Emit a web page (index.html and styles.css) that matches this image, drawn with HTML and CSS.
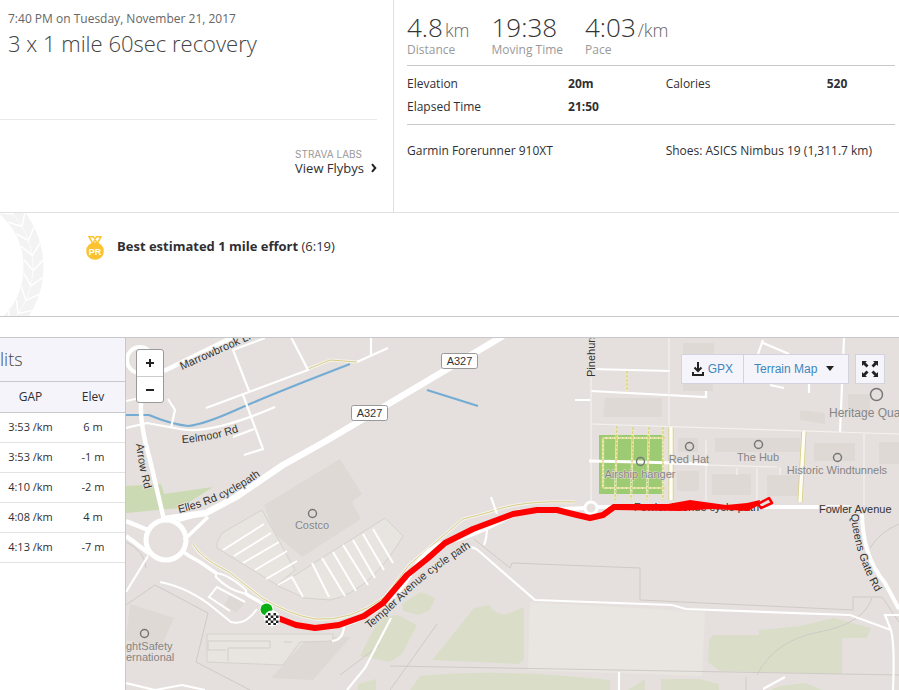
FILE: index.html
```html
<!DOCTYPE html>
<html lang="en">
<head>
<meta charset="utf-8">
<title>3 x 1 mile 60sec recovery</title>
<link rel="stylesheet" href="styles.css">
</head>
<body>
<header class="summary">
  <section class="activity">
    <div class="intro">
      <time class="date">7:40 PM on Tuesday, November 21, 2017</time>
      <h1 class="title">3 x 1 mile 60sec recovery</h1>
    </div>
    <div class="labs">
      <a class="flybys" href="#flybys">
        <span class="eyebrow">STRAVA LABS</span>
        <span class="flybys-name">View Flybys
          <svg class="chevron" viewBox="0 0 6 10" aria-hidden="true"><path d="M1 1.2 4.3 5 1 8.8"/></svg>
        </span>
      </a>
    </div>
  </section>
  <section class="numbers">
    <ul class="stats">
      <li><strong class="value">4.8<span class="unit">km</span></strong><span class="label">Distance</span></li>
      <li><strong class="value">19:38</strong><span class="label">Moving Time</span></li>
      <li><strong class="value">4:03<span class="unit">/km</span></strong><span class="label">Pace</span></li>
    </ul>
    <dl class="more">
      <dt>Elevation</dt><dd>20m</dd>
      <dt>Calories</dt><dd>520</dd>
      <dt>Elapsed Time</dt><dd>21:50</dd>
    </dl>
    <div class="gear">
      <span>Garmin Forerunner 910XT</span>
      <span>Shoes: ASICS Nimbus 19 (1,311.7 km)</span>
    </div>
  </section>
</header>

<section class="achievements">
  <svg class="laurel" viewBox="0 213 46 103" aria-hidden="true">
    <defs><path id="vein" d="M33 272 24 261M33 272 44 261"/></defs>
    <circle cx="-47" cy="267" r="80.500" fill="none" stroke="#f3f3f3" stroke-width="20"/>
    <g fill="none" stroke="#fff" stroke-width="1.500">
      <circle cx="-47" cy="267" r="80" stroke-width=".7"/>
      <use href="#vein" transform="rotate(-45 -47 267)"/>
      <use href="#vein" transform="rotate(-34 -47 267)"/>
      <use href="#vein" transform="rotate(-23 -47 267)"/>
      <use href="#vein" transform="rotate(-12 -47 267)"/>
      <use href="#vein" transform="rotate(-1 -47 267)"/>
      <use href="#vein" transform="rotate(10 -47 267)"/>
      <use href="#vein" transform="rotate(21 -47 267)"/>
      <use href="#vein" transform="rotate(32 -47 267)"/>
      <use href="#vein" transform="rotate(43 -47 267)"/>
    </g>
  </svg>
  <svg class="medal" viewBox="0 0 18 24" role="img" aria-label="Personal record">
    <path d="M3 .7h4.500l4 7H6.800zM15 .7h-4.500l-4 7h4.700z" fill="#fff" stroke="#fcc22f" stroke-width="1.400"/>
    <circle cx="9" cy="15" r="8.800" fill="#fcc22f"/>
    <text x="9" y="18.500" text-anchor="middle" fill="#fff" font-size="9" font-weight="700">PR</text>
  </svg>
  <p class="effort"><strong>Best estimated 1 mile effort</strong> (6:19)</p>
</section>

<main class="analysis">
  <section class="splits">
    <h2>lits</h2>
    <table>
      <thead><tr><th scope="col">GAP</th><th scope="col">Elev</th></tr></thead>
      <tbody>
        <tr><td>3:53 /km</td><td>6 m</td></tr>
        <tr><td>3:53 /km</td><td>-1 m</td></tr>
        <tr><td>4:10 /km</td><td>-2 m</td></tr>
        <tr><td>4:08 /km</td><td>4 m</td></tr>
        <tr><td>4:13 /km</td><td>-7 m</td></tr>
      </tbody>
    </table>
  </section>

  <section class="map" aria-label="Route map">
    <svg class="canvas" viewBox="126 338 773 352" preserveAspectRatio="xMinYMin slice">
      <defs>
        <path id="p-marrow" d="M182 370 260 335"/>
        <path id="p-eelmoor" d="M182 443Q215 441 244 430"/>
        <path id="p-arrow" d="M136 444Q139 470 146 494"/>
        <path id="p-elles" d="M179 513Q225 503 268 470"/>
        <path id="p-templer" d="M369 629Q388 614 409 593T478 543"/>
        <path id="p-queens" d="M851 514Q854 558 881 601"/>
        <path id="p-pine" d="M595 377V330"/>
      </defs>
      <rect x="126" y="338" width="773" height="352" fill="#e5e0dd"/>

      <!-- grass -->
      <path d="M126 486 161 484 164 494 213 487 180 508 126 513z" fill="#cbdab3"/>
      <path d="M402 604 421 592 435 598 430 610 419 615 403 611zM380 617 398 615 417 625 402 654 390 662 360 656zM432 660 474 608 489 605Q498 618 510 613L524 607V659L519 664zM420 676Q500 668 610 680V690H410zM709 640 713 635H759V630L800 626 834 618 871 628 867 638H842V674L720 671 708 662zM661 679H699L719 684V690H661zM780 686 805 683 823 690H770zM645 679V690H628zM358 684 376 679V690H358z" fill="#dadec9"/>
      <path d="M530 602 705 612 702 676 528 670z" fill="#e9e5e1"/>

      <!-- buildings and car parks -->
      <g fill="#ded9d5">
        <path d="M264 505 340 459 362 494 352 502 361 519 302 557 275 534zM605 398H662V417H603zM683 343H714V360H683zM683 380H713V391H683zM800 410 825 413V424L800 420zM715 438H800V452H715zM678 438H698V452H678zM677 471H699V491H677zM712 474H751V495H712zM767 475H800V496H767zM814 443H855V461H814zM879 442H899V464H879zM848 394H870V413H848zM130 604 174 618 160 650 126 640zM271 678 309 637H351L313 680zM230 595 245 603 236 613 224 605z"/>
      </g>
      <g fill="#e8e4e0" stroke="#d6d1cd" stroke-width="1">
        <path d="M217 543 222 533 262 510 295 570 277 585 217 548zM278 586 385 518 403 536Q370 592 330 600L305 598zM207 634H333V641L300 642 283 665 207 662z"/>
      </g>
      <path d="M208 641H270V648H228V661M208 641V650H226M284 642 292 642" fill="none" stroke="#d3ceca"/>
      <path d="M126 605 155 585 208 613 196 662 250 690M126 542Q145 551 146 568M474 539 510 568 512 563 640 568V600L853 610V597H882L899 622M390 666 899 675M437 624 390 690M757 675Q775 640 819 632T872 598M870 548Q880 532 899 524M746 677V690M340 675 380 645" fill="none" stroke="#cfcac6"/>

      <!-- water -->
      <path d="M126 415H149Q170 424 188 426 205 424 236 410T350 364M427 390 478 406" fill="none" stroke="#74acd4" stroke-width="2.200"/>

      <!-- cycle paths -->
      <path d="M308 369 330 360 357 362M193 544Q200 558 229 572L262 598Q290 615 315 619 350 622 385 597L409 565 463 519 490 512Q520 500 575 502" fill="none" stroke="#f5f2ee" stroke-width="3"/>
      <path d="M308 369 330 360 357 362M193 544Q200 558 229 572L262 598Q290 615 315 619 350 622 385 597L409 565 463 519 490 512Q520 500 575 502" fill="none" stroke="#d6ce82" stroke-width="1"/>

      <!-- minor roads -->
      <g fill="none" stroke="#fff" stroke-width="2.200">
        <path d="M206 408 308 370 290 335M249 391 233 350 265 338M126 428 147 423 180 429Q210 435 275 407M243 395 263 449 244 455M254 429 233 437M168 399 175 410 171 428M357 362 388 348M371 338V355M126 401 140 398"/>
        <path d="M575 400H591M591 369 670 371M591 391 706 397V391M844 338 840 432M763 340 758 354M761 342 789 354M770 385 784 388M809 384V393M491 497 497 514M487 527Q487 538 484 545M462 549Q472 544 480 552L535 600 672 605 686 609 850 615 891 630M619 672V690M763 689 785 677M899 615H885L891 630Q895 645 893 690M391 618 365 668 347 690M344 627Q343 640 332 641M126 683 155 690 182 685 205 690M126 592 148 556"/>
      </g>
      <path d="M671 426V500M804 430 800 502" fill="none" stroke="#d6ce82" stroke-width="5"/>
      <path d="M671 426V500M804 430 800 502" fill="none" stroke="#fffdf2" stroke-width="3.500"/>
      <path d="M591 338V505M592 424 899 434M672 464 777 467M706 440V500M737 468V475M757 468V500M780 467V475M864 434V505M669 338V425" fill="none" stroke="#f4f1ef" stroke-width="1.200"/>

      <!-- car park aisles -->
      <path d="M223 550 264 524M234 556 271 533M243 563 279 542M255 570 287 551M266 579 297 561M278 585 292 577 303 597M312 563 329 597M322 558 345 596M333 552 356 591M343 545 368 585M353 540 375 578M363 534 384 570M373 529 393 563" fill="none" stroke="#fff" stroke-width="2"/>
      <path d="M160 582Q190 588 215 609L231 622Q245 626 257 609M230 611 209 597 217 587 245 602" fill="none" stroke="#fff" stroke-width="2"/>

      <!-- main roads -->
      <g fill="none" stroke="#fff" stroke-linejoin="round">
        <path d="M126 521 148 530M126 536 150 554M164 520 150 460Q140 425 141 405L140 380M178 520 206 512" stroke-width="4.500"/>
        <path d="M165 519 206 513 236 497 283 465 326 441 503 336" stroke-width="6.500"/>
        <path d="M184 540 208 517M182 551Q190 557 200 562L216 573M246 594 260 602 275 614" stroke-width="3.500"/>
        <path d="M216 573Q228 574 246 590L246 594Q228 590 216 577z" stroke-width="2.200"/>
        <circle cx="166" cy="540" r="20" stroke-width="5"/>
        <circle cx="140" cy="360" r="13" stroke-width="4"/>
        <path d="M164 371 235 336" stroke-width="4.500"/>
        <path d="M289 623Q330 635 364 617T412 572 450 541 520 511L585 508M598 507H850M862 507Q861 555 885 583L899 609" stroke-width="4"/>
      </g>

      <!-- airship hanger -->
      <path d="M599 435H663V494H599z" fill="#9ccb73"/>
      <path d="M589 461 640 462 708 464" fill="none" stroke="#fff" stroke-width="3"/>
      <path d="M603 438H665M603 488H665M603 438V488M617 426 615 500M633 427 631 500M649 427 647 500M663 427V500M627 371V391" fill="none" stroke="#f1f2c6" stroke-width="2.200"/>
      <path d="M603 438H665M603 488H665M603 438V488M617 426 615 500M633 427 631 500M649 427 647 500M663 427V500M627 371V391" fill="none" stroke="#cfc65f" stroke-dasharray="3 1"/>

      <!-- road shields -->
      <g fill="#fff" stroke="#999">
        <rect x="351.500" y="405.500" width="36" height="15" rx="2"/>
        <rect x="441.500" y="353.500" width="36" height="15" rx="2"/>
      </g>
      <g class="road-no"><text x="369.500" y="417">A327</text><text x="459.500" y="365">A327</text></g>

      <!-- road names -->
      <g class="road">
        <text><textPath href="#p-marrow">Marrowbrook Ln</textPath></text>
        <text><textPath href="#p-eelmoor">Eelmoor Rd</textPath></text>
        <text><textPath href="#p-arrow">Arrow Rd</textPath></text>
        <text><textPath href="#p-elles">Elles Rd cyclepath</textPath></text>
        <text><textPath href="#p-templer">Templer Avenue cycle path</textPath></text>
        <text><textPath href="#p-queens">Queens Gate Rd</textPath></text>
        <text><textPath href="#p-pine">Pinehurst</textPath></text>
        <text x="819" y="513">Fowler Avenue</text>
        <text x="634" y="511">Fowler Avenue cycle path</text>
      </g>

      <!-- places -->
      <g fill="none" stroke="#777" stroke-width="1.500">
        <circle cx="312.500" cy="513.500" r="4"/><circle cx="144.500" cy="633.500" r="4"/><circle cx="640.500" cy="461.500" r="4"/>
        <circle cx="689.500" cy="446.500" r="4"/><circle cx="758.500" cy="444.500" r="4"/><circle cx="837.500" cy="457.500" r="4"/><circle cx="876.500" cy="394.500" r="6"/>
      </g>
      <g class="place">
        <text x="312" y="529" text-anchor="middle">Costco</text>
        <text x="126" y="650">ghtSafety</text>
        <text x="126" y="661">ernational</text>
        <text x="640" y="478" text-anchor="middle">Airship hanger</text>
        <text x="689" y="463" text-anchor="middle">Red Hat</text>
        <text x="758" y="461" text-anchor="middle">The Hub</text>
        <text x="837" y="474" text-anchor="middle">Historic Windtunnels</text>
        <text class="large" x="829" y="417">Heritage Quarter</text>
      </g>

      <!-- route -->
      <circle cx="591" cy="508" r="6" fill="#e5e0dd" stroke="#fff" stroke-width="3"/>
      <g fill="none" stroke="#f00" stroke-linejoin="round">
        <path d="M275 617 296 625 315 628 339 625 364 616 383 603 407 575 427 559 445 543 473 529 513 514 537 510 557 510 577 515 590 518 603 515 614 507 645 507 690 507" stroke-width="6"/>
        <path d="M758 504 769 498 772 503 761 508z" stroke-width="2.500"/>
      </g>
      <path d="M613 504 668 504 690 500 726 505 747 503 760 500 759 505 748 511 712 509 680 511 613 510z" fill="#f00"/>
      <circle cx="266.500" cy="609.500" r="7" fill="#fff"/><circle cx="266.500" cy="609.500" r="6" fill="#0caf13"/>
      <circle cx="272" cy="618.500" r="8" fill="#fff"/>
      <path d="M268 613h2.500v2.500H268zM273.500 613h2.500v2.500h-2.500zM265.500 615.500h2.500v2.500h-2.500zM270.700 615.500h2.600v2.500h-2.600zM276 615.500h2.500v2.500H276zM268 618h2.700v2.500H268zM273.300 618h2.700v2.500h-2.700zM265.500 620.500h2.500v2.500h-2.500zM270.700 620.500h2.600v2.500h-2.600zM276 620.500h2.500v2.500H276zM268 623h2.700v2H268zM273.300 623h2.700v2h-2.700z" fill="#222"/>
    </svg>

    <div class="zoom">
      <button type="button" aria-label="Zoom in"><svg viewBox="0 0 10 10"><path d="M1 5h8M5 1v8"/></svg></button>
      <button type="button" aria-label="Zoom out"><svg viewBox="0 0 10 10"><path d="M1 5h8"/></svg></button>
    </div>
    <div class="tools">
      <div class="group">
        <button class="tool gpx" type="button">
          <svg viewBox="0 0 12 16" aria-hidden="true"><path d="M6 1v9M2.500 6.500 6 10 9.500 6.500M1 11v3h10v-3"/></svg>GPX
        </button>
        <div class="style-picker">
          <select class="tool" aria-label="Map style"><option>Terrain Map</option></select>
          <svg class="caret" viewBox="0 0 8 5" aria-hidden="true"><path d="M0 0h8L4 5z"/></svg>
        </div>
      </div>
      <button class="tool expand" type="button" aria-label="Full screen">
        <svg viewBox="0 0 18 18"><path d="M1 1h5L4.500 2.500 7.500 5.500 5.500 7.500 2.500 4.500 1 6zM17 1v5l-1.500-1.500-3 3-2-2 3-3L12 1zM1 17v-5l1.500 1.500 3-3 2 2-3 3L6 17zM17 17h-5l1.500-1.500-3-3 2-2 3 3L17 12z"/></svg>
      </button>
    </div>
  </section>
</main>
</body>
</html>
```

FILE: styles.css
```css
* { box-sizing: border-box; }

body {
  margin: 0;
  min-height: 100vh;
  display: flex;
  flex-direction: column;
  background: #fff;
  color: #2f2f33;
  font: 12px/20px "Open Sans", "Noto Sans", sans-serif;
}

h1, h2, p, ul, dl, dd { margin: 0; padding: 0; }
button, select { font: inherit; color: inherit; margin: 0; padding: 0; }

/* Summary */
.summary {
  display: grid;
  grid-template-columns: 394fr 505fr;
  border-bottom: 1px solid #e0e0e3;
}
.activity {
  border-right: 1px solid #e0e0e3;
  padding-right: 16px;
}
.intro {
  height: 120px;
  padding: 9px 0 0 8px;
  border-bottom: 1px solid #e8e8ea;
}
.date { display: block; color: #666; }
.title {
  font-size: 22px;
  line-height: 28px;
  font-weight: 300;
  color: #444;
}
.labs {
  display: flex;
  justify-content: flex-end;
  padding: 28px 0 36px;
}
.flybys { color: #2f2f33; text-decoration: none; }
.eyebrow {
  display: block;
  font-size: 10px;
  line-height: 12px;
  color: #999;
  font-family: Inter, sans-serif;
}
.flybys-name {
  display: flex;
  align-items: center;
  gap: 7px;
  font-size: 13px;
  line-height: 16px;
}
.chevron { width: 6px; height: 10px; fill: none; stroke: #222; stroke-width: 2; }

.numbers { padding: 12px 4px 0 13px; }
.stats {
  display: flex;
  gap: 22px;
  height: 54px;
  border-bottom: 1px solid #c8c8cc;
  list-style: none;
}
.value {
  display: block;
  height: 30px;
  font-size: 26px;
  line-height: 30px;
  font-weight: 300;
  color: #333;
}
.unit { font-size: 18px; line-height: 20px; color: #666; padding-left: 2px; }
.label { display: block; line-height: 16px; color: #999; }
.more {
  display: grid;
  grid-template-columns: 33% 20% 33% 14%;
  line-height: 23px;
  padding: 6px 0;
  border-bottom: 1px solid #c8c8cc;
}
.more dd { font-weight: 700; }
.gear { display: flex; padding-top: 16px; }
.gear span:first-child { width: 53%; }

/* Achievements */
.achievements {
  display: flex;
  align-items: flex-start;
  height: 104px;
  border-bottom: 1px solid #c8c8cc;
}
.laurel { width: 46px; height: 103px; margin-right: 40px; }
.medal { width: 18px; height: 24px; margin-top: 23px; }
.effort { margin: 23px 0 0 13px; font-size: 13px; }

/* Analysis */
.analysis {
  display: flex;
  flex: 1;
  margin-top: 20px;
  border-top: 1px solid #c8c8cc;
}
.splits { flex: 0 0 126px; border-right: 1px solid #c8c8cc; }
.splits h2 {
  height: 44px;
  background: #f5f4fb;
  border-bottom: 1px solid #c8c8cc;
  font-size: 18px;
  line-height: 43px;
  font-weight: 300;
  color: #444;
}
.splits table { width: 100%; border-collapse: collapse; table-layout: fixed; }
.splits th, .splits td {
  height: 30px;
  padding: 0;
  border-bottom: 1px solid #e3e3e6;
  text-align: center;
  font-size: 11px;
}
.splits th:first-child, .splits td:first-child { width: 61px; }
.splits th {
  background: #f5f4fb;
  border-color: #c8c8cc;
  font-size: 12px;
  font-weight: 500;
}

.map { position: relative; flex: 1; overflow: hidden; background: #e5e0dd; }
.canvas { position: absolute; inset: 0; width: 100%; height: 100%; }
.canvas text { font-family: "Liberation Sans", sans-serif; }
.medal text { font-family: "Liberation Sans", sans-serif; }
.road, .road-no { font-size: 11px; fill: #333; }
.road { stroke: #e5e0dd; stroke-width: 2px; paint-order: stroke; }
.road-no { text-anchor: middle; }
.place { font-size: 11px; fill: #858585; stroke: #e5e0dd; stroke-width: 1px; paint-order: stroke; }
.canvas .large { font-size: 12px; }

.zoom {
  position: absolute;
  top: 11px;
  left: 10px;
  width: 28px;
  border: 1px solid #999;
  border-radius: 3px;
  background: #fff;
}
.zoom button {
  display: flex;
  align-items: center;
  justify-content: center;
  width: 100%;
  height: 26px;
  border: 0;
  background: none;
}
.zoom button + button { border-top: 1px solid #ccc; }
.zoom svg { width: 10px; height: 10px; stroke: #222; stroke-width: 2; }

.tools {
  position: absolute;
  top: 16px;
  right: 14px;
  display: flex;
  gap: 6px;
}
.group { display: flex; }
.tool {
  height: 30px;
  border: 1px solid #d3d3e0;
  border-radius: 0;
  background: #f5f4fb;
  color: #3d87bd;
  font: 12px/28px "Liberation Sans", sans-serif;
}
.gpx { display: flex; align-items: center; gap: 4px; padding: 0 10px; }
.gpx svg { width: 12px; height: 16px; fill: none; stroke: #222; stroke-width: 2; }
.style-picker { position: relative; margin-left: -1px; }
.style-picker select { appearance: none; width: 106px; padding: 0 10px; }
.caret { position: absolute; top: 12px; right: 15px; width: 8px; height: 5px; fill: #222; pointer-events: none; }
.expand { width: 30px; display: flex; align-items: center; justify-content: center; }
.expand svg { width: 18px; height: 18px; fill: #222; }
```
